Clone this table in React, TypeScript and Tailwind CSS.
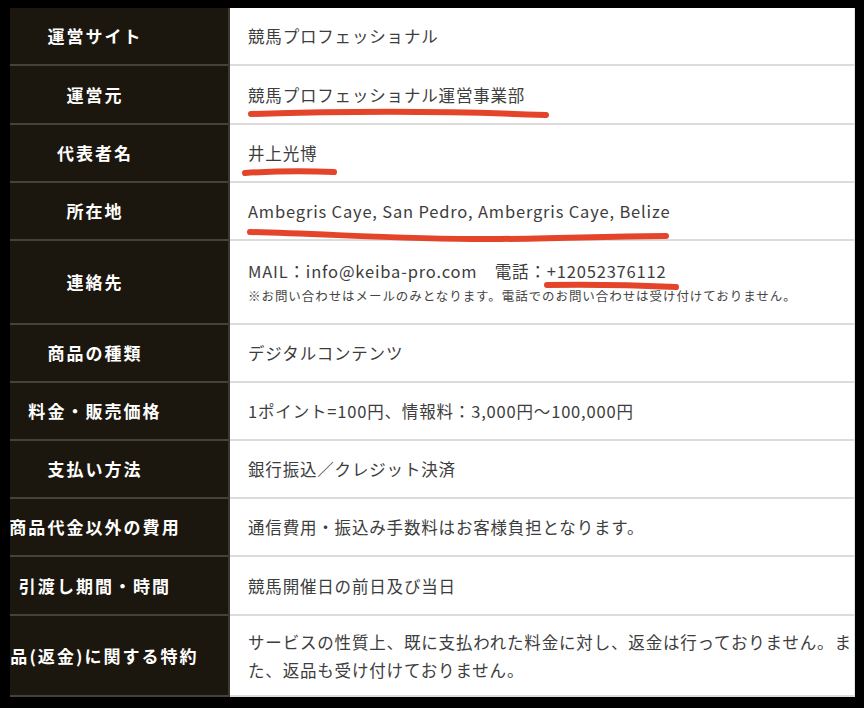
import React from "react";

type Row = { label: string; h: number; content: React.ReactNode };

const rows: Row[] = [
  { label: "運営サイト", h: 58, content: "競馬プロフェッショナル" },
  { label: "運営元", h: 59, content: "競馬プロフェッショナル運営事業部" },
  { label: "代表者名", h: 58, content: "井上光博" },
  { label: "所在地", h: 58, content: "Ambegris Caye, San Pedro, Ambergris Caye, Belize" },
  {
    label: "連絡先",
    h: 84,
    content: (
      <div className="flex flex-col">
        <span>MAIL：info@keiba-pro.com　電話：+12052376112</span>
        <span className="text-[12.5px] tracking-[0.075em] text-[#444] leading-[22px]">
          ※お問い合わせはメールのみとなります。電話でのお問い合わせは受け付けておりません。
        </span>
      </div>
    ),
  },
  { label: "商品の種類", h: 58, content: "デジタルコンテンツ" },
  { label: "料金・販売価格", h: 58, content: "1ポイント=100円、情報料：3,000円〜100,000円" },
  { label: "支払い方法", h: 58, content: "銀行振込／クレジット決済" },
  { label: "商品代金以外の費用", h: 58, content: "通信費用・振込み手数料はお客様負担となります。" },
  { label: "引渡し期間・時間", h: 59, content: "競馬開催日の前日及び当日" },
  {
    label: "返品(返金)に関する特約",
    h: 81,
    content:
      "サービスの性質上、既に支払われた料金に対し、返金は行っておりません。また、返品も受け付けておりません。",
  },
];

export default function App() {
  return (
    <div
      className="relative w-[864px] h-[708px] bg-black overflow-hidden"
      style={{ fontFamily: '"Noto Sans CJK JP", "Noto Sans", sans-serif' }}
    >
      <div className="pl-[10px] pt-[8px]">
        <div className="w-[845px] flex flex-col">
          {rows.map((r, i) => (
            <div key={i} className="flex" style={{ height: r.h }}>
              <div className="w-[218px] shrink-0 bg-[#1c170e] border-b-2 border-[#46423a] overflow-hidden flex items-center">
                <div className="w-[266px] shrink-0 ml-[-48px] text-center text-white font-bold text-[17px] tracking-[0.12em] whitespace-nowrap">
                  {r.label}
                </div>
              </div>
              <div className="w-[2px] shrink-0 bg-[#3b392e]" />
              <div className="flex-1 bg-white border-b-2 border-[#dcdcdc] border-r border-r-[#e2e2e2] flex items-center pl-[18px] pr-[2px] text-[16.5px] tracking-[0.05em] text-[#3d3d3d] leading-[28px]">
                <div>{r.content}</div>
              </div>
            </div>
          ))}
        </div>
      </div>
      <svg
        className="absolute left-0 top-0 pointer-events-none"
        width="864"
        height="708"
        viewBox="0 0 864 708"
      >
        <g stroke="#e4452a" strokeLinecap="round" fill="none" strokeWidth="6">
          <path d="M 251 114 C 350 111, 450 111, 546 115" />
          <path d="M 245 173 Q 290 170 334 172" />
          <path d="M 250 232 C 330 234, 420 240, 500 239 S 620 236, 666 236" />
          <path d="M 547 285 Q 610 284 676 287" />
        </g>
      </svg>
    </div>
  );
}
